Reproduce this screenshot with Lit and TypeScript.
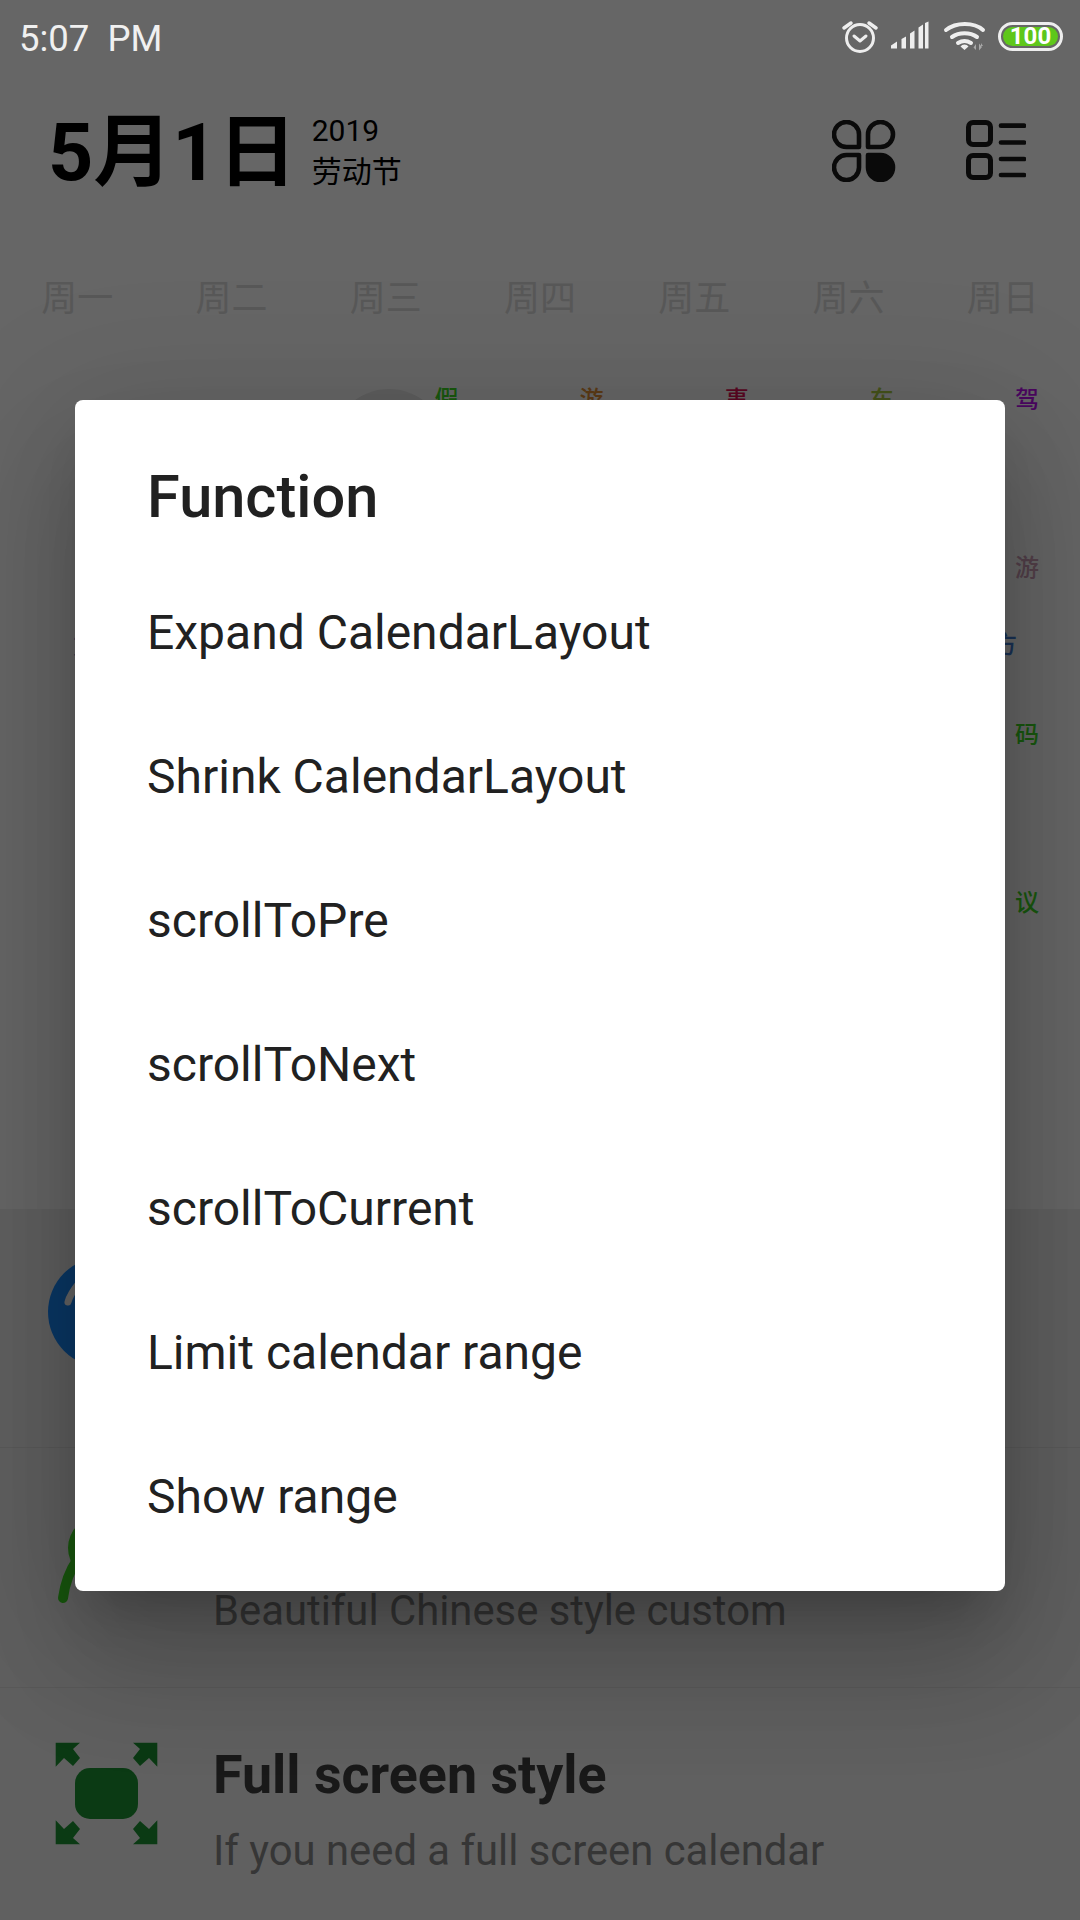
import { LitElement, html, css, svg } from "lit";
import { customElement } from "lit/decorators.js";

const WEEK = ["周一", "周二", "周三", "周四", "周五", "周六", "周日"];
const MENU = [
  "Expand CalendarLayout",
  "Shrink CalendarLayout",
  "scrollToPre",
  "scrollToNext",
  "scrollToCurrent",
  "Limit calendar range",
  "Show range",
];

interface Mark {
  text: string;
  color: string;
  right?: number;
  top?: number;
  left?: number;
}

// key is "row-col"
const MARKS: Record<string, Mark> = {
  "0-2": { text: "假", color: "#40db25" },
  "0-3": { text: "游", color: "#e69138" },
  "0-4": { text: "事", color: "#df1356" },
  "0-5": { text: "车", color: "#aacc44" },
  "0-6": { text: "驾", color: "#bc13f0" },
  "1-6": { text: "游", color: "#d0a0b8" },
  "1-0": { text: "方", color: "#3f80d8", left: 41, top: 103 },
  "2-6": { text: "码", color: "#40db25" },
  "3-6": { text: "议", color: "#40db25" },
};
const EXTRA: Mark = { text: "方", color: "#3f80d8", right: 31, top: 102 };

@customElement("app-root")
export class AppRoot extends LitElement {
  static styles = css`
    :host {
      display: block;
      position: relative;
      width: 1080px;
      height: 1920px;
      overflow: hidden;
      background: #fff;
      font-family: Roboto, "Noto Sans CJK SC", sans-serif;
    }
    .status {
      position: relative;
      z-index: 2;
      height: 76px;
      display: flex;
      align-items: center;
      color: #f0f0f0;
      font-size: 36.5px;
      padding-left: 19px;
      box-sizing: border-box;
    }
    .time {
      white-space: pre;
    }
    .status svg {
      position: absolute;
      left: 0;
      top: 0;
    }
    .battery {
      position: absolute;
      left: 998px;
      top: 22px;
      width: 65px;
      height: 29px;
      box-sizing: border-box;
      border: 3px solid #eee;
      border-radius: 15px;
      padding: 2px;
    }
    .battery span {
      display: block;
      height: 19px;
      border-radius: 10px;
      background: #5ec71a;
      color: #fff;
      font-size: 24px;
      font-weight: 700;
      line-height: 19px;
      text-align: center;
    }
    .header {
      height: 150px;
      display: flex;
      align-items: center;
      padding: 0 54px 0 48px;
      color: #000;
    }
    .date {
      font-size: 79px;
      font-weight: 700;
      line-height: 84px;
      margin-top: 3px;
    }
    .sub {
      margin-left: 15px;
      font-size: 30px;
      line-height: 41px;
    }
    .tools {
      margin-left: auto;
      display: flex;
      gap: 70px;
    }
    .week {
      display: grid;
      grid-template-columns: repeat(7, 1fr);
      padding: 39px 0 30px;
      font-size: 36px;
      line-height: 68px;
      text-align: center;
      color: #dcdcdc;
    }
    .calendar {
      display: grid;
      grid-template-columns: repeat(7, 1fr);
      grid-auto-rows: 167.7px;
      padding: 0 32px 7.5px;
    }
    .cell {
      position: relative;
      display: flex;
      align-items: center;
      justify-content: center;
    }
    .today {
      width: 116px;
      height: 116px;
      margin-right: 12px;
      border-radius: 50%;
      background: #ebebeb;
    }
    .mark {
      position: absolute;
      top: 25px;
      right: 9px;
      font-size: 24px;
      font-weight: 500;
      line-height: 24px;
    }
    .list {
      background: #f0f0f0;
    }
    .row {
      display: flex;
      height: 240px;
      box-sizing: border-box;
      border-bottom: 1px solid #e0e0e0;
    }
    .row:first-child {
      height: 239px;
    }
    .row svg {
      flex: none;
    }
    .copy {
      padding-top: 54px;
    }
    .name {
      height: 66px;
      font-size: 53.8px;
      font-weight: 700;
      line-height: 66px;
      color: #404040;
    }
    .desc {
      margin-top: 18px;
      font-size: 41.8px;
      line-height: 50px;
      color: #888;
    }
    .scrim {
      position: absolute;
      inset: 0;
      z-index: 1;
      background: rgba(0, 0, 0, 0.6);
    }
    .dialog {
      position: absolute;
      left: 75px;
      top: 400px;
      width: 930px;
      height: 1191px;
      box-sizing: border-box;
      padding-top: 60px;
      border-radius: 8px;
      background: #fff;
      color: #212121;
      box-shadow: 0 72px 114px 9px rgba(0, 0, 0, 0.14),
        0 27px 138px 24px rgba(0, 0, 0, 0.12),
        0 33px 45px -21px rgba(0, 0, 0, 0.2);
    }
    .dialog h2 {
      margin: 0 0 27px;
      padding-left: 72px;
      font-size: 59.5px;
      font-weight: 500;
      line-height: 74px;
    }
    .dialog div {
      height: 144px;
      padding-left: 72px;
      font-size: 48px;
      line-height: 144px;
    }
  `;

  renderStatusIcons() {
    return html`<svg width="1080" height="76" viewBox="0 0 1080 76">
      <g fill="none" stroke="#eee" stroke-width="3" stroke-linecap="round" stroke-linejoin="round">
        <circle cx="860" cy="38" r="13.5" />
        <path d="M854 36l6 5 6-5" />
        <path d="M844 28l7-5M876 28l-7-5" stroke-width="3.5" />
      </g>
      <g fill="#eee">
        <path d="M891 48.5v-3l6-4v7zM901.500 48.500v-9.500l4.500-2.500v12zM910 48.500v-15l4.500-3v18zM923 48.500h-4.500v-21l4.500-3zM928.500 48.500h-3.500v-25.500l3.500-1.500z" />
      </g>
      <g fill="none" stroke="#eee" stroke-width="4" stroke-linecap="round">
        <path d="M946 30c10-8 28-8 37 0" />
        <path d="M952 37c7-5 18-5 25 0" />
        <path d="M958 43c4-2.500 9-2.500 13 0" />
      </g>
      <path d="M960.500 46.500a4.500 3.500 0 0 1 8 0l-4 3.500z" fill="#eee" />
      <path d="M976 50v-6l-2.500 3.500zM979 43.500v7l3-3.500zM981 43l2 3h-2z" fill="#a8a8a8" />
    </svg>`;
  }

  renderGridIcon() {
    const petal = "M27 27H14.500A12.500 12.500 0 1 1 27 14.500Z";
    return html`<svg width="64" height="62" viewBox="0 0 64 62">
      <g fill="none" stroke="#1a1a1a" stroke-width="4.600" stroke-linejoin="round">
        <path d=${petal} />
        <path d=${petal} transform="translate(63 0) scale(-1 1)" />
        <path d=${petal} transform="translate(0 62) scale(1 -1)" />
      </g>
      <path d=${petal} transform="translate(63 62) scale(-1 -1)" fill="#1a1a1a" stroke="#1a1a1a" stroke-width="4.600" stroke-linejoin="round" />
    </svg>`;
  }

  renderListIcon() {
    return html`<svg width="60" height="60" viewBox="0 0 60 60">
      <g fill="none" stroke="#1a1a1a" stroke-width="5" stroke-linecap="round">
        <rect x="2.500" y="2.500" width="22" height="22" rx="4.500" />
        <rect x="2.500" y="35.500" width="22" height="22" rx="4.500" />
      </g>
      <path d="M35 5.700h23M35 22.500h23M35 39h23M35 55h23" fill="none" stroke="#1a1a1a" stroke-width="4.700" stroke-linecap="round" />
    </svg>`;
  }

  renderCalendar() {
    const cells = [];
    for (let r = 0; r < 5; r++) {
      for (let c = 0; c < 7; c++) {
        const mark = MARKS[`${r}-${c}`];
        const extra = r === 1 && c === 6;
        cells.push(html`<div class="cell">
          ${r === 0 && c === 2 ? html`<div class="today"></div>` : ""}
          ${mark ? this.renderMark(mark) : ""} ${extra ? this.renderMark(EXTRA) : ""}
        </div>`);
      }
    }
    return cells;
  }

  renderMark(m: Mark) {
    let pos = "";
    if (m.left !== undefined) pos += `left:${m.left}px;right:auto;`;
    if (m.right !== undefined) pos += `right:${m.right}px;`;
    if (m.top !== undefined) pos += `top:${m.top}px;`;
    return html`<span class="mark" style="color:${m.color};${pos}">${m.text}</span>`;
  }

  render() {
    const arrow = svg`<path d="M15.700 12.700H40L33 19l7 9-7 8-9-8-8.300 8.700z" />`;
    return html`
      <div class="status">
        <span class="time">5:07  PM</span>
        ${this.renderStatusIcons()}
        <div class="battery"><span>100</span></div>
      </div>
      <div class="header">
        <div class="date">5月1日</div>
        <div class="sub">
          <div>2019</div>
          <div>劳动节</div>
        </div>
        <div class="tools">${this.renderGridIcon()} ${this.renderListIcon()}</div>
      </div>
      <div class="week">${WEEK.map((d) => html`<div>${d}</div>`)}</div>
      <div class="calendar">${this.renderCalendar()}</div>
      <div class="list">
        <div class="row">
          <svg width="213" height="238" viewBox="0 0 213 238">
            <circle cx="103" cy="103" r="55" fill="#1a8cff" />
            <path d="M68 93q2-8 12-20" fill="none" stroke="#fff" stroke-width="7" stroke-linecap="round" />
          </svg>
        </div>
        <div class="row">
          <svg width="213" height="239" viewBox="0 0 213 239">
            <ellipse cx="100" cy="100" rx="32" ry="32" fill="#40db25" />
            <path d="M63 150q3-22 14-38" fill="none" stroke="#40db25" stroke-width="10" stroke-linecap="round" />
          </svg>
          <div class="copy">
            <div class="name"></div>
            <div class="desc">Beautiful Chinese style custom</div>
          </div>
        </div>
        <div class="row">
          <svg width="213" height="239" viewBox="0 0 213 239">
            <g transform="translate(40 42)" fill="#1c9232">
              <rect x="35" y="38" width="63" height="51" rx="15" />
              ${arrow}
              <g transform="translate(133 0) scale(-1 1)">${arrow}</g>
              <g transform="translate(0 127) scale(1 -1)">${arrow}</g>
              <g transform="translate(133 127) scale(-1 -1)">${arrow}</g>
            </g>
          </svg>
          <div class="copy">
            <div class="name">Full screen style</div>
            <div class="desc">If you need a full screen calendar</div>
          </div>
        </div>
      </div>
      <div class="scrim">
        <div class="dialog">
          <h2>Function</h2>
          ${MENU.map((m) => html`<div>${m}</div>`)}
        </div>
      </div>
    `;
  }
}
